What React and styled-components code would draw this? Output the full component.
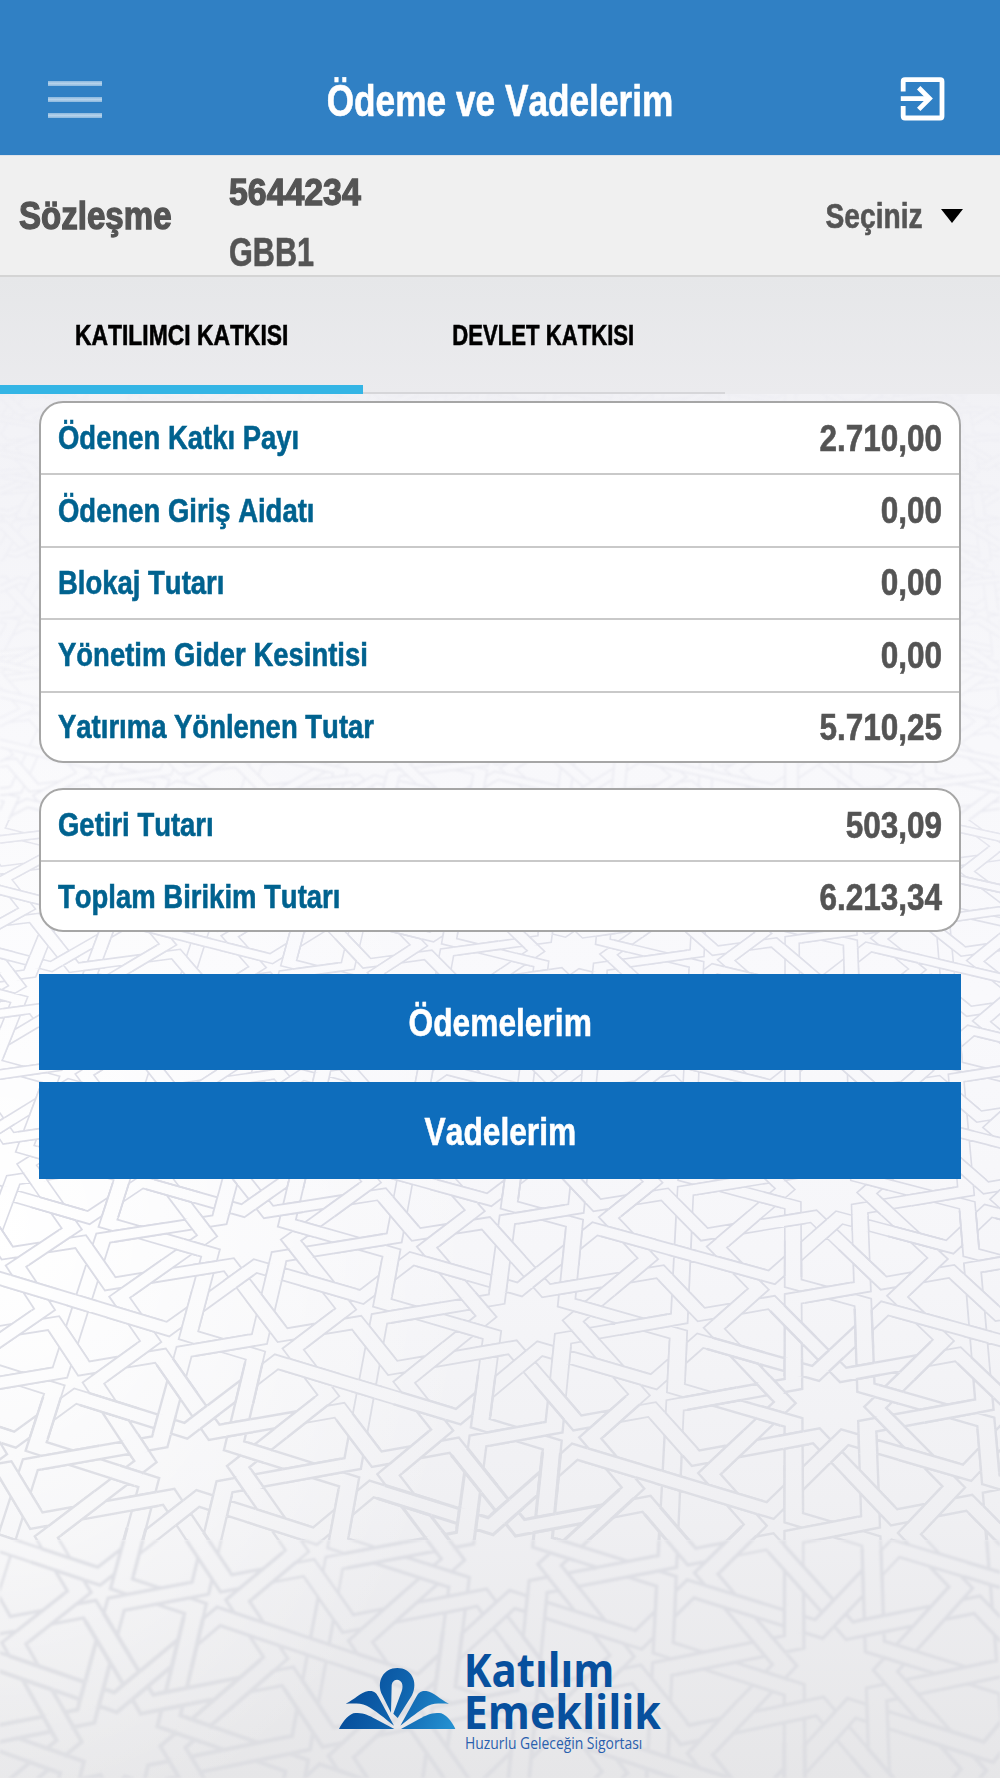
import { styled, createGlobalStyle } from 'styled-components';

const contributionRows = [
  { label: 'Ödenen Katkı Payı', value: '2.710,00' },
  { label: 'Ödenen Giriş Aidatı', value: '0,00' },
  { label: 'Blokaj Tutarı', value: '0,00' },
  { label: 'Yönetim Gider Kesintisi', value: '0,00' },
  { label: 'Yatırıma Yönlenen Tutar', value: '5.710,25' },
];

const totalRows = [
  { label: 'Getiri Tutarı', value: '503,09' },
  { label: 'Toplam Birikim Tutarı', value: '6.213,34' },
];

// ---- girih pattern -------------------------------------------------------
// Decagons, pentagons and barrel hexagons with unit edges, strapped at 72deg,
// laid on a tilted plane.

const HALF = 0.115;
const SPAN = 4.236;
const A = [SPAN, 0];
const B = [SPAN * Math.cos(rad(72)), SPAN * Math.sin(rad(72))];

function rad(deg) {
  return (deg * Math.PI) / 180;
}

const polar = (r, deg) => [r * Math.cos(rad(deg)), r * Math.sin(rad(deg))];

const project = ([x, y]) => {
  const j = y / B[1];
  const i = (x - j * B[0]) / SPAN;
  const u = i / 2;
  const v = (j + i / 2) / 2;
  const w = 1 + 0.0302 * u - 0.1923 * v;
  return [(601.9 * u - 151.3 * v + 249) / w, (-11 * u + 170.6 * v + 1238) / w];
};

const unit = ([x0, y0], [x1, y1]) => {
  const l = Math.hypot(x1 - x0, y1 - y0);
  return [(x1 - x0) / l, (y1 - y0) / l];
};

const offsetLine = (pts, d) =>
  pts.map((p, i) => {
    const before = i > 0 ? unit(pts[i - 1], p) : unit(p, pts[i + 1]);
    const after = i < pts.length - 1 ? unit(p, pts[i + 1]) : before;
    const n0 = [-before[1], before[0]];
    const n1 = [-after[1], after[0]];
    const k = d / (1 + n0[0] * n1[0] + n0[1] * n1[1]);
    return [p[0] + (n0[0] + n1[0]) * k, p[1] + (n0[1] + n1[1]) * k];
  });

const toPath = (pts) => 'M' + pts.map((p) => project(p).map((n) => n.toFixed(1)).join(' ')).join('L');

// tile = { strands: polylines, overs: [point, direction, half length] }
const ringTile = (count, apothem, inner, step) => {
  const strands = [];
  const overs = [];
  const turn = 360 / count;
  for (let k = 0; k < count; k++) {
    const mid = polar(apothem, k * turn);
    const apex = polar(inner, k * turn + (turn * step) / 2);
    const end = polar(apothem, (k + step) * turn);
    strands.push([mid, apex, end]);
    overs.push([mid, unit(mid, apex), 0.37]);
    if (step === 2) {
      overs.push([polar(0.81, k * turn + turn * 1.5), unit(apex, end), 0.17]);
    }
  }
  return { strands, overs };
};

const decagon = ringTile(10, 1.539, 0.588, 2);
const pentagon = ringTile(5, 0.688, 0.263, 1);
const barrel = {
  strands: [
    [[0.655, 0.4755], [-0.655, -0.4755]],
    [[-0.655, 0.4755], [0.655, -0.4755]],
    [[0.655, 0.4755], [0.1545, 0.4755], [0, 0.951]],
    [[-0.655, 0.4755], [-0.1545, 0.4755], [0, 0.951]],
    [[0.655, -0.4755], [0.1545, -0.4755], [0, -0.951]],
    [[-0.655, -0.4755], [-0.1545, -0.4755], [0, -0.951]],
  ],
  overs: [[[0, 0], polar(1, -36), 0.17]],
};

const buildPattern = () => {
  const bands = [900, 1200, 1400, 1560, 1680, 9999].map((limit, i) => ({
    limit,
    width: [1.5, 1.6, 1.8, 2.4, 3.2, 4][i],
    base: '',
    cover: '',
    top: '',
  }));

  const place = (tile, center, angle) => {
    const [px, py] = project(center);
    if (px < -220 || px > 1220 || py < 180 || py > 1980) return;
    const band = bands.find((b) => py < b.limit);
    const [c, s] = polar(1, angle);
    const spin = ([x, y]) => [x * c - y * s, x * s + y * c];
    const move = (p) => {
      const [x, y] = spin(p);
      return [x + center[0], y + center[1]];
    };

    tile.strands.forEach((strand) => {
      const pts = strand.map(move);
      band.base += toPath(offsetLine(pts, HALF)) + toPath(offsetLine(pts, -HALF));
    });
    tile.overs.forEach(([p, dir, len]) => {
      const [x, y] = move(p);
      const [dx, dy] = spin(dir);
      const pts = [[x - dx * len, y - dy * len], [x + dx * len, y + dy * len]];
      const left = offsetLine(pts, HALF);
      const right = offsetLine(pts, -HALF);
      band.top += toPath(left) + toPath(right);
      band.cover += toPath([...left, ...right.reverse()]) + 'Z';
    });
  };

  for (let i = -5; i < 12; i++) {
    for (let j = -16; j < 6; j++) {
      const origin = [i * A[0] + j * B[0], i * A[1] + j * B[1]];
      place(decagon, origin, 18);
      [-18, 18, 54, 90].forEach((deg) => {
        const [x, y] = polar(2.227, deg);
        place(pentagon, [origin[0] + x, origin[1] + y], deg + 180);
      });
      place(barrel, [origin[0] + (A[0] + B[0]) / 2, origin[1] + B[1] / 2], 36);
    }
  }
  return bands;
};

const patternBands = buildPattern();

const PatternBackdrop = () => (
  <Backdrop viewBox='0 0 1000 1778' aria-hidden='true'>
    <defs>
      <linearGradient id='line-fade' gradientUnits='userSpaceOnUse' x1='0' y1='390' x2='0' y2='1778'>
        <stop offset='0' stopColor='#e0e0ea' stopOpacity='0.2' />
        <stop offset='0.24' stopColor='#e0e0ea' stopOpacity='0.35' />
        <stop offset='0.36' stopColor='#dcdde7' stopOpacity='0.85' />
        <stop offset='0.6' stopColor='#dadbe5' stopOpacity='1' />
        <stop offset='0.85' stopColor='#dadbe1' stopOpacity='0.8' />
        <stop offset='1' stopColor='#d6d7dd' stopOpacity='0.55' />
      </linearGradient>
      {/* depth of field: the plane is sharpest around the middle */}
      <filter id='soft'>
        <feGaussianBlur stdDeviation='0.7' />
      </filter>
      <filter id='softer'>
        <feGaussianBlur stdDeviation='1.3' />
      </filter>
      <mask id='straps' maskUnits='userSpaceOnUse' x='0' y='390' width='1000' height='1388'>
        {['base', 'cover', 'top'].map((layer) =>
          patternBands.map((band) => (
            <path
              key={`${layer}-${band.limit}`}
              d={band[layer]}
              fill={layer === 'cover' ? '#000' : 'none'}
              stroke={layer === 'cover' ? 'none' : '#fff'}
              strokeWidth={band.width}
            />
          )),
        )}
      </mask>
    </defs>
    <g filter='url(#softer)'>
      <rect x='0' y='390' width='1000' height='430' fill='url(#line-fade)' mask='url(#straps)' />
      <rect x='0' y='1540' width='1000' height='238' fill='url(#line-fade)' mask='url(#straps)' />
    </g>
    <g filter='url(#soft)'>
      <rect x='0' y='820' width='1000' height='720' fill='url(#line-fade)' mask='url(#straps)' />
    </g>
  </Backdrop>
);

// ---- icons ---------------------------------------------------------------

const ExitIcon = () => (
  <svg width='46' height='46' viewBox='0 0 46 46' fill='none' stroke='#fff' strokeWidth='4.8'>
    <path d='M3.2 15.5V5.4Q3.2 3.6 5 3.6H40.2Q42 3.6 42 5.4V40.2Q42 42 40.2 42H5Q3.2 42 3.2 40.2V30' />
    <path d='M0.8 22.6H30' />
    <path d='M18.7 11.8L29.5 22.6L18.7 33.4' />
  </svg>
);

const Logo = () => (
  <svg width='360' height='148' viewBox='0 0 1080 444' role='img' aria-label='Katılım Emeklilik'>
    <defs>
      <linearGradient id='mark' gradientUnits='userSpaceOnUse' x1='40' y1='60' x2='350' y2='190'>
        <stop offset='0.1' stopColor='#07509d' />
        <stop offset='0.5' stopColor='#1064ae' />
        <stop offset='1' stopColor='#238fd0' />
      </linearGradient>
    </defs>
    <g fill='url(#mark)' transform='translate(45 90)'>
      <path d='M168 158L142 106C122 64 146 24 187 24C228 24 251 64 231 106L188 174L175 161L200 94C207 74 199 59 186 59C176 59 170 68 170 78Z' />
      <path d='M32 131C60 118 75 98 100 93C118 91 124 100 130 110L177 197C150 175 120 150 95 137C75 129 55 131 32 131Z' />
      <path d='M342 131C314 118 299 98 274 93C256 91 250 100 244 110L196 197C224 175 254 150 279 137C299 129 319 131 342 131Z' />
      <path d='M12 207C22 188 35 168 55 160C80 155 100 165 120 176L178 207Z' />
      <path d='M361 207C352 188 339 168 319 160C294 155 274 165 254 176L198 207Z' />
    </g>
    <LogoText x='431' y='171' textLength='452' lengthAdjust='spacingAndGlyphs'>
      Katılım
    </LogoText>
    <LogoText x='431' y='297' textLength='592' lengthAdjust='spacingAndGlyphs'>
      Emeklilik
    </LogoText>
    <Tagline x='435' y='356' textLength='532' lengthAdjust='spacingAndGlyphs'>
      Huzurlu Geleceğin Sigortası
    </Tagline>
  </svg>
);

const DataCard = ({ rows, height }) => (
  <Card $height={height}>
    {rows.map(({ label, value }) => (
      <Row key={label}>
        <Condensed as='dt' $size={34} $scale={0.808} $color='#00628f'>
          {label}
        </Condensed>
        <Value>
          <Condensed $size={36} $scale={0.875} $origin='right'>
            {value}
          </Condensed>
        </Value>
      </Row>
    ))}
  </Card>
);

const App = () => (
  <Page>
    <GlobalStyle />
    <PatternBackdrop />

    <Header>
      <MenuButton aria-label='Menü'>
        <MenuLine />
        <MenuLine />
        <MenuLine />
      </MenuButton>
      <Title>
        <Condensed $size={43.5} $scale={0.81} $origin='center' $color='#fff'>
          Ödeme ve Vadelerim
        </Condensed>
      </Title>
      <ExitButton aria-label='Çıkış'>
        <ExitIcon />
      </ExitButton>
    </Header>

    <ContractBar>
      <Condensed $size={38} $scale={0.87} $stroke={1.3}>
        Sözleşme
      </Condensed>
      <Contract>
        <Condensed $size={36} $scale={0.94} $stroke={1.3}>
          5644234
        </Condensed>
        <Condensed $size={40} $scale={0.765}>
          GBB1
        </Condensed>
      </Contract>
      <Picker>
        <Condensed $size={35} $scale={0.805} $origin='right'>
          Seçiniz
        </Condensed>
        <Caret />
      </Picker>
    </ContractBar>

    <Tabs>
      <Tab $active>
        <Condensed $size={29.5} $scale={0.775} $origin='center' $color='#000'>
          KATILIMCI KATKISI
        </Condensed>
      </Tab>
      <Tab>
        <Condensed $size={29.5} $scale={0.75} $origin='center' $color='#000'>
          DEVLET KATKISI
        </Condensed>
      </Tab>
    </Tabs>

    <Content>
      <DataCard rows={contributionRows} height={362} />
      <DataCard rows={totalRows} height={144} />
      <Actions>
        <Action>
          <Condensed $size={39.5} $scale={0.803} $origin='center' $color='#fff'>
            Ödemelerim
          </Condensed>
        </Action>
        <Action>
          <Condensed $size={39.5} $scale={0.803} $origin='center' $color='#fff'>
            Vadelerim
          </Condensed>
        </Action>
      </Actions>
    </Content>

    <Footer>
      <Logo />
    </Footer>
  </Page>
);

export default App;

const GlobalStyle = createGlobalStyle`
  * {
    box-sizing: border-box;
    margin: 0;
    padding: 0;
  }

  body {
    font-family: 'Liberation Sans', Arial, sans-serif;
    font-weight: 700;
    color: #545454;
  }

  button {
    border: 0;
    background: none;
    font: inherit;
  }
`;

const Page = styled.main`
  position: relative;
  z-index: 0;
  display: flex;
  flex-direction: column;
  width: 1000px;
  height: 1778px;
  overflow: hidden;
  background:
    radial-gradient(ellipse 480px 620px at 0 1230px, #fff 0%, rgba(255, 255, 255, 0) 100%),
    linear-gradient(#ececef 276px, #f3f3f7 430px, #f8f8fb 740px, #f9f9fc 1000px, #f6f6f9 1250px, #f0f0f3 1500px, #e6e6e8 1778px);
`;

const Backdrop = styled.svg`
  position: absolute;
  inset: 0;
  z-index: -1;
`;

const Condensed = styled.span`
  display: inline-block;
  font-size: ${({ $size }) => $size}px;
  font-weight: 700;
  font-kerning: none;
  line-height: 1;
  white-space: nowrap;
  color: ${({ $color }) => $color};
  transform: scaleX(${({ $scale }) => $scale});
  transform-origin: ${({ $origin }) => $origin || 'left'} center;
  -webkit-text-stroke: ${({ $stroke }) => $stroke || 0.6}px currentColor;
`;

const Header = styled.header`
  display: grid;
  grid-template-columns: 1fr auto 1fr;
  align-items: center;
  height: 155px;
  padding: 43px 54px 0 48px;
  background: #3080c4;
`;

const Title = styled.h1`
  padding: 6px 0 0 6px;
  line-height: 1;
`;

const MenuButton = styled.button`
  display: flex;
  flex-direction: column;
  gap: 11px;
  width: 54px;
`;

const MenuLine = styled.span`
  height: 5px;
  background: linear-gradient(#8bb8de, #b5d2eb 50%, #8bb8de);
`;

const ExitButton = styled.button`
  justify-self: end;
  height: 46px;
`;

const ContractBar = styled.section`
  display: grid;
  grid-template-columns: 210px 1fr auto;
  align-items: center;
  height: 122px;
  padding: 0 37px 0 19px;
  border-top: 1px solid #dfe3ea;
  border-bottom: 2px solid #d4d4d4;
  background: #f0f0f0;
`;

const Contract = styled.div`
  display: flex;
  flex-direction: column;
  gap: 21px;
  padding-top: 16px;
`;

const Picker = styled.div`
  display: flex;
  align-items: center;
  gap: 18px;
`;

const Caret = styled.span`
  border: solid transparent;
  border-width: 14px 11.5px 0;
  border-top-color: #000;
`;

const Tabs = styled.nav`
  display: flex;
  height: 117px;
  background: linear-gradient(#e6e7e9, #ebebee);
`;

const Tab = styled.div`
  display: flex;
  align-items: center;
  justify-content: center;
  width: 362.5px;
  padding-top: ${({ $active }) => ($active ? 7 : 0)}px;
  border-bottom: ${({ $active }) => ($active ? '9px solid #34b5e5' : '2px solid #d6d6d9')};
`;

const Content = styled.div`
  display: flex;
  flex-direction: column;
  gap: 25px;
  padding: 7px 39px 0;
`;

const Card = styled.dl`
  height: ${({ $height }) => $height}px;
  overflow: hidden;
  border: 2px solid #a6a6a6;
  border-radius: 24px;
  background: #fff;
`;

const Row = styled.div`
  display: flex;
  align-items: center;
  justify-content: space-between;
  height: 72.4px;
  padding: 0 17px 2px;
  border-bottom: 2px solid #c9c9c9;

  &:last-child {
    padding-bottom: 5px;
    border-bottom: 0;
  }
`;

const Value = styled.dd`
  padding-top: 3px;
  line-height: 1;
`;

const Actions = styled.div`
  display: flex;
  flex-direction: column;
  gap: 12px;
  padding-top: 16.5px;
`;

const Action = styled.button`
  height: 96.5px;
  padding-top: 2px;
  background: #0e6dbc;
`;

const Footer = styled.footer`
  display: flex;
  justify-content: center;
  height: 148px;
  margin-top: auto;
`;

const LogoText = styled.text`
  font-family: 'Open Sans', 'Noto Sans', sans-serif;
  font-size: 142px;
  font-weight: 700;
  fill: #07509e;
`;

const Tagline = styled.text`
  font-family: 'Open Sans', 'Noto Sans', sans-serif;
  font-size: 48px;
  font-weight: 400;
  fill: #2a5fae;
`;
